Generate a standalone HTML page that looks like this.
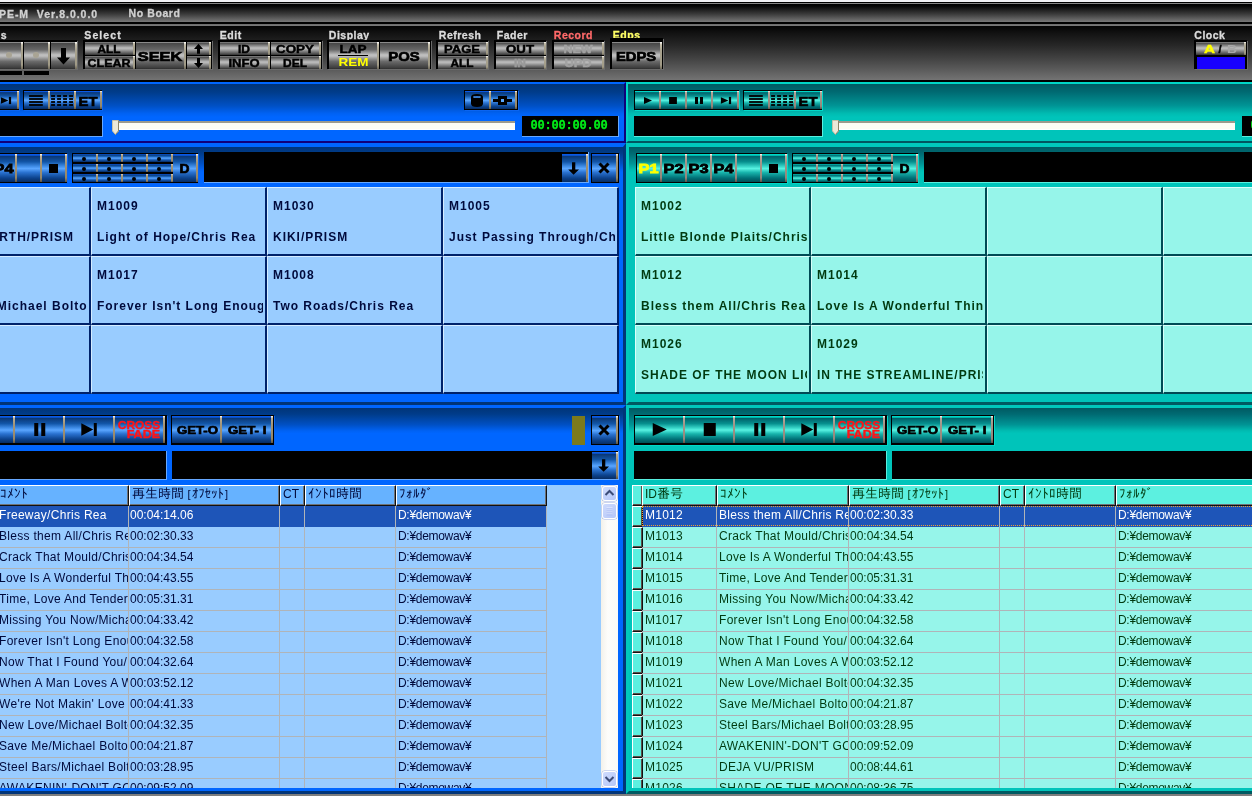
<!DOCTYPE html><html lang="ja"><head><meta charset="utf-8"><title>PE-M Ver.8.0.0.0</title><style>
html,body{margin:0;padding:0}
body{width:1252px;height:796px;overflow:hidden;position:relative;background:#7e7e7e;font-family:"Liberation Sans","IPAGothic",sans-serif;font-size:12px;line-height:1}
div,span,svg{position:absolute;box-sizing:border-box}
.ex{font-family:"Liberation Sans",sans-serif;font-weight:bold}
#root{left:0;top:0;width:1252px;height:796px;overflow:hidden;will-change:transform}
#top0{left:0;top:0;width:1252px;height:4px;background:linear-gradient(#f3f3f6 0,#f3f3f6 50%,#000 50%,#000 75%,#858585 75%,#858585 100%)}
#title{left:0;top:4px;width:1252px;height:18px;background:linear-gradient(#000 0,#050505 10%,#3a3a3a 55%,#787878 100%)}
#tsep1{left:0;top:22px;width:1252px;height:2px;background:#000}
#tsep2{left:0;top:24px;width:1252px;height:2px;background:linear-gradient(#6a6a6a,#7c7c7c)}
#tool{left:0;top:26px;width:1252px;height:54px;background:linear-gradient(#040404 0,#141414 15%,#262626 35%,#424242 60%,#606060 85%,#737373 100%)}
#tsep3{left:0;top:80px;width:1252px;height:2px;background:#000}
.lbl{-webkit-text-stroke:.3px;color:#dcdcdc;font-weight:bold;font-size:10.5px;letter-spacing:.5px;white-space:nowrap;height:12px;line-height:12px}
.gbox{background:#000;box-shadow:1px 1px 0 #6a6a6a}
.gb{background:linear-gradient(#8a8a8a 0,#8a8a8a 3.6%,#464646 4%,#666 28%,#bebebe 47%,#bebebe 52%,#6a6a6a 72%,#3c3c3c 96%,#2c2c2c 100%);overflow:hidden}
.gb.s{background:linear-gradient(#777 0,#777 7%,#484848 8%,#b8b8b8 44%,#b8b8b8 52%,#4a4a4a 92%,#303030 100%)}
.bb:after{background:linear-gradient(#fff 0,#bcae92 8%,#a4967a 30%,#948668 85%,#5e5444 100%) !important}
.teal .bb:after{background:linear-gradient(#fff 0,#b6a89a 8%,#a4968a 30%,#94867a 85%,#5e5048 100%) !important}
.gb:after,.bb:after,.tb:after{content:"";position:absolute;right:0;top:0;bottom:0;width:2px;background:linear-gradient(#fff 0,#c4beaa 10%,#aaa490 30%,#a09a86 85%,#6e6858 100%)}
.bb{overflow:hidden}
.tb{overflow:hidden}
.blue .bb{background:linear-gradient(#0a5ae6 0,#0a5ae6 4%,#0a3876 9%,#1256a8 28%,#3f8ce6 44%,#5aa6ff 52%,#2a72d0 66%,#0c428c 86%,#072c62 100%)}
.teal .bb{background:linear-gradient(#00d6c6 0,#00d6c6 4%,#00626a 9%,#068f8e 28%,#36d2c6 44%,#58f2e2 52%,#18b4ac 66%,#007076 86%,#004e55 100%)}
.bx{background:#000}
.blue .bx{box-shadow:1px 1px 0 #0a64f0}
.teal .bx{box-shadow:1px 1px 0 #00d8c8}
.disp{background:#000}
.blue .disp{border-right:1px solid #66a8ff;border-bottom:1px solid #66a8ff}
.teal .disp{border-right:1px solid #58f0e0;border-bottom:1px solid #58f0e0}
.pset{top:0;height:796px;width:720px;overflow:hidden}
.pan{left:0;width:720px}
.blue .pan{border-style:solid;border-color:#0066ff #10007a #10007a #0066ff}
.teal .pan{border-style:solid;border-color:#00d6c6 #005560 #005560 #00d6c6}
.blue .p3{border-color:#0066ff #003478 #003478 #0066ff}
.teal .p3{border-color:#00c8bc #005a62 #005a62 #00c8bc}
.blue .p1{background:linear-gradient(#003478 0,#003c8a 14%,#0050c4 38%,#0062f4 52%,#0066ff 58%,#0066ff 100%)}
.teal .p1{background:linear-gradient(#005a62 0,#006a72 14%,#009495 38%,#00bcb2 52%,#00c4ba 58%,#00c4ba 100%)}
.cell{width:176px;height:69px;overflow:hidden;white-space:nowrap;font-weight:bold;font-size:12px;letter-spacing:.98px}
.blue .cell{background:#99ccff;border-style:solid;border-width:1px 2px 2px 1px;border-color:#d6ecff #00226a #00226a #d6ecff;color:#000a3c;box-shadow:0 0 0 0 #000}
.teal .cell{background:#96f5ea;border-style:solid;border-width:1px 2px 2px 1px;border-color:#d8fffa #004a55 #004a55 #d8fffa;color:#003a10}
.cell span{left:5px;height:14px;line-height:14px;width:166px;overflow:hidden}
.cell .l1{top:11px}
.cell .l2{top:42px}
.tbl{overflow:hidden}
.blue .tbl{background:#99ccff}
.teal .tbl{background:#96f5ea}
.th{top:0;height:21px;border-top:1px solid #fff;border-left:1px solid #fff;border-bottom:1px solid #111;border-right:1px solid #111;box-shadow:inset -1px -1px 0 #6e7278;white-space:nowrap;overflow:hidden;font-size:12px;line-height:16px;padding-left:2px}
.blue .th{background:#66b2ff;color:#000a3c}
.teal .th{background:#5cf0e0;color:#003a10}
.th b{font-weight:normal;position:static;font-size:13px;letter-spacing:0}
.th u{text-decoration:none;letter-spacing:.5px}
.th u.n{letter-spacing:-.2px}
.th em{font-style:normal;font-size:12px}
.th i{font-style:normal;display:inline-block;width:6px;text-align:center;font-size:11px}
.th i.sp{width:2px}
.focus{border:1px dotted #f0a030}
.sel{left:7px;width:11px;height:21px;border-top:1px solid #fff;border-left:1px solid #fff;border-bottom:1px solid #111;border-right:1px solid #111;box-shadow:inset -1px -1px 0 #5a5048}
.blue .sel{background:#66b2ff}
.teal .sel{background:#5cf0e0}
.row{left:0;height:21px;width:720px;overflow:visible}
.td{top:0;height:21px;border-bottom:1px solid #b0b4b8;overflow:hidden;white-space:nowrap;font-size:12px;line-height:19px;padding-left:2px;letter-spacing:.25px}
.blue .td{color:#000a3c}
.teal .td{color:#003a10}
.row.on{background:#1e55b8}
.row.on .td{color:#fff;border-bottom-color:#1e55b8}
.vl{top:21px;width:1px;height:300px;background:#b0b4b8}
.ico{overflow:visible}
</style></head><body><div id="root"><div id="top0"></div><div id="title"></div><div id="tsep1"></div><div id="tsep2"></div><div id="tool"></div><div id="tsep3"></div><div class="lbl" style="left:-1px;top:8px;color:#d0d0d0;font-size:10.5px;letter-spacing:.95px">PE-M&nbsp; Ver.8.0.0.0</div><div class="lbl" style="left:128px;top:7px;color:#d0d0d0;font-size:10.5px;letter-spacing:.6px;left:128.500px">No Board</div><div class="lbl" style="left:0.8px;top:28.8px;color:#dcdcdc">s</div><div class="gbox" style="left:-30px;top:40px;width:107px;height:29px;"></div><div class="gb" style="left:-28px;top:42px;width:51px;height:27px;"><div style="left:34px;top:10px;width:6px;height:6px;border-radius:3px;background:#a9a494"></div></div><div class="gb" style="left:24px;top:42px;width:26px;height:27px;"><div style="left:9px;top:10px;width:6px;height:6px;border-radius:3px;background:#a9a494"></div></div><div class="gb" style="left:51px;top:42px;width:26px;height:27px;"><svg class="ico" width="26" height="27" style="left:0;top:0"><path d="M10 6h5v9.500h4l-6.500 7l-6.500 -7h4z" fill="#000"/></svg></div><div class="" style="left:0px;top:71px;width:22px;height:4px;background:#000"></div><div class="" style="left:24px;top:71px;width:25px;height:4px;background:#000"></div><div class="lbl" style="left:84.3px;top:28.8px;color:#dcdcdc;letter-spacing:1.1px">Select</div><div class="gbox" style="left:83px;top:40px;width:129px;height:29px;"></div><div class="gb s" style="left:85px;top:42px;width:50px;height:13px;"><svg width="50" height="13" viewBox="0 0 50 13" style="left:0;top:0"><text x="12.5" y="11.08" textLength="23" lengthAdjust="spacingAndGlyphs" font-family="Liberation Sans, sans-serif" font-weight="bold" font-size="10.5" fill="#000" stroke="#000" stroke-width="0.45" >ALL</text></svg></div><div class="gb s" style="left:85px;top:56px;width:50px;height:13px;"><svg width="50" height="13" viewBox="0 0 50 13" style="left:0;top:0"><text x="2.5" y="11.08" textLength="43" lengthAdjust="spacingAndGlyphs" font-family="Liberation Sans, sans-serif" font-weight="bold" font-size="10.5" fill="#000" stroke="#000" stroke-width="0.45" >CLEAR</text></svg></div><div class="gb" style="left:136px;top:42px;width:50px;height:27px;"><svg width="50" height="27" viewBox="0 0 50 27" style="left:0;top:0"><text x="1.75" y="19.052" textLength="44.5" lengthAdjust="spacingAndGlyphs" font-family="Liberation Sans, sans-serif" font-weight="bold" font-size="13.2" fill="#000" stroke="#000" stroke-width="0.7" >SEEK</text></svg></div><div class="gb s" style="left:187px;top:42px;width:24px;height:13px;"><svg class="ico" width="24" height="13" style="left:0;top:0"><path d="M11.500 1.800l4.500 5.200h-3v4.800h-3v-4.800h-3z" fill="#000"/></svg></div><div class="gb s" style="left:187px;top:56px;width:24px;height:13px;"><svg class="ico" width="24" height="13" style="left:0;top:0"><path d="M11.500 11.900l4.500 -4.800h-3v-5h-3v5h-3z" fill="#000"/></svg></div><div class="lbl" style="left:219.8px;top:28.8px;color:#dcdcdc">Edit</div><div class="gbox" style="left:218px;top:40px;width:104px;height:29px;"></div><div class="gb s" style="left:220px;top:42px;width:50px;height:13px;"><svg width="50" height="13" viewBox="0 0 50 13" style="left:0;top:0"><text x="18" y="11.08" textLength="12" lengthAdjust="spacingAndGlyphs" font-family="Liberation Sans, sans-serif" font-weight="bold" font-size="10.5" fill="#000" stroke="#000" stroke-width="0.45" >ID</text></svg></div><div class="gb s" style="left:220px;top:56px;width:50px;height:13px;"><svg width="50" height="13" viewBox="0 0 50 13" style="left:0;top:0"><text x="8.5" y="11.08" textLength="31" lengthAdjust="spacingAndGlyphs" font-family="Liberation Sans, sans-serif" font-weight="bold" font-size="10.5" fill="#000" stroke="#000" stroke-width="0.45" >INFO</text></svg></div><div class="gb s" style="left:271px;top:42px;width:50px;height:13px;"><svg width="50" height="13" viewBox="0 0 50 13" style="left:0;top:0"><text x="5" y="11.08" textLength="38" lengthAdjust="spacingAndGlyphs" font-family="Liberation Sans, sans-serif" font-weight="bold" font-size="10.5" fill="#000" stroke="#000" stroke-width="0.45" >COPY</text></svg></div><div class="gb s" style="left:271px;top:56px;width:50px;height:13px;"><svg width="50" height="13" viewBox="0 0 50 13" style="left:0;top:0"><text x="12" y="11.08" textLength="24" lengthAdjust="spacingAndGlyphs" font-family="Liberation Sans, sans-serif" font-weight="bold" font-size="10.5" fill="#000" stroke="#000" stroke-width="0.45" >DEL</text></svg></div><div class="lbl" style="left:328.8px;top:28.8px;color:#dcdcdc">Display</div><div class="gbox" style="left:327px;top:40px;width:104px;height:29px;"></div><div class="gb" style="left:329px;top:42px;width:50px;height:27px;"><svg width="50" height="14" viewBox="0 0 50 14" style="left:0;top:0"><text x="10.5" y="11" textLength="27" lengthAdjust="spacingAndGlyphs" font-family="Liberation Sans, sans-serif" font-weight="bold" font-size="10.5" fill="#000" stroke="#000" stroke-width="0.45" >LAP</text></svg><div style="left:9px;top:12.500px;width:30px;height:1.500px;background:#000"></div><svg width="50" height="14" style="left:0;top:13px"><text x="9.5" y="11" textLength="30" lengthAdjust="spacingAndGlyphs" font-family="Liberation Sans, sans-serif" font-weight="bold" font-size="10.5" fill="#ffff00">REM</text></svg></div><div class="gb" style="left:380px;top:42px;width:50px;height:27px;"><svg width="50" height="27" viewBox="0 0 50 27" style="left:0;top:0"><text x="8.3" y="18.836" textLength="31.4" lengthAdjust="spacingAndGlyphs" font-family="Liberation Sans, sans-serif" font-weight="bold" font-size="12.6" fill="#000" stroke="#000" stroke-width="0.7" >POS</text></svg></div><div class="lbl" style="left:438.8px;top:28.8px;color:#dcdcdc">Refresh</div><div class="gbox" style="left:436px;top:40px;width:52px;height:29px;"></div><div class="gb s" style="left:438px;top:42px;width:50px;height:13px;"><svg width="50" height="13" viewBox="0 0 50 13" style="left:0;top:0"><text x="6" y="11.08" textLength="36" lengthAdjust="spacingAndGlyphs" font-family="Liberation Sans, sans-serif" font-weight="bold" font-size="10.5" fill="#000" stroke="#000" stroke-width="0.45" >PAGE</text></svg></div><div class="gb s" style="left:438px;top:56px;width:50px;height:13px;"><svg width="50" height="13" viewBox="0 0 50 13" style="left:0;top:0"><text x="12.5" y="11.08" textLength="23" lengthAdjust="spacingAndGlyphs" font-family="Liberation Sans, sans-serif" font-weight="bold" font-size="10.5" fill="#000" stroke="#000" stroke-width="0.45" >ALL</text></svg></div><div class="lbl" style="left:496.8px;top:28.8px;color:#dcdcdc">Fader</div><div class="gbox" style="left:494px;top:40px;width:52px;height:29px;"></div><div class="gb s" style="left:496px;top:42px;width:50px;height:13px;"><svg width="50" height="13" viewBox="0 0 50 13" style="left:0;top:0"><text x="10" y="11.08" textLength="28" lengthAdjust="spacingAndGlyphs" font-family="Liberation Sans, sans-serif" font-weight="bold" font-size="10.5" fill="#000" stroke="#000" stroke-width="0.45" >OUT</text></svg></div><div class="gb s" style="left:496px;top:56px;width:50px;height:13px;"><svg width="50" height="13" viewBox="0 0 50 13" style="left:0;top:0"><text x="18" y="11.08" textLength="12" lengthAdjust="spacingAndGlyphs" font-family="Liberation Sans, sans-serif" font-weight="bold" font-size="10.5" fill="#9a9a9a" stroke="#9a9a9a" stroke-width="0.45" >IN</text></svg></div><div class="lbl" style="left:553.8px;top:28.8px;color:#ff6a6a">Record</div><div class="gbox" style="left:552px;top:40px;width:52px;height:29px;"></div><div class="gb s" style="left:554px;top:42px;width:50px;height:13px;"><svg width="50" height="13" viewBox="0 0 50 13" style="left:0;top:0"><text x="9.5" y="11.08" textLength="29" lengthAdjust="spacingAndGlyphs" font-family="Liberation Sans, sans-serif" font-weight="bold" font-size="10.5" fill="#a2a2a2" stroke="#a2a2a2" stroke-width="0.45" >NEW</text></svg></div><div class="gb s" style="left:554px;top:56px;width:50px;height:13px;"><svg width="50" height="13" viewBox="0 0 50 13" style="left:0;top:0"><text x="10.5" y="11.08" textLength="27" lengthAdjust="spacingAndGlyphs" font-family="Liberation Sans, sans-serif" font-weight="bold" font-size="10.5" fill="#a2a2a2" stroke="#a2a2a2" stroke-width="0.45" >UPD</text></svg></div><div class="lbl" style="left:612.8px;top:28.8px;color:#ffff66">Edps</div><div class="gbox" style="left:610px;top:38px;width:53px;height:31px;"></div><div class="gb" style="left:612px;top:42px;width:50px;height:27px;"><svg width="50" height="27" viewBox="0 0 50 27" style="left:0;top:0"><text x="3.9" y="18.692" textLength="40.2" lengthAdjust="spacingAndGlyphs" font-family="Liberation Sans, sans-serif" font-weight="bold" font-size="12.2" fill="#000" stroke="#000" stroke-width="0.7" >EDPS</text></svg></div><div class="lbl" style="left:1194.3px;top:28.8px;color:#dcdcdc">Clock</div><div class="gbox" style="left:1194px;top:40px;width:53px;height:29px;"></div><div class="gb s" style="left:1196px;top:42px;width:50px;height:13px;"><svg width="50" height="13" style="left:0;top:0"><text x="8" y="11" font-family="Liberation Sans, sans-serif" font-weight="bold" font-size="11" fill="#ffff00" stroke="#ffff00" stroke-width=".4" textLength="11" lengthAdjust="spacingAndGlyphs">A</text><text x="22.500" y="11" stroke="#000" stroke-width=".5" font-family="Liberation Sans, sans-serif" font-weight="bold" font-size="11" fill="#000">/</text><text x="31" y="11" font-family="Liberation Sans, sans-serif" font-weight="bold" font-size="11" fill="#a8a8a8" textLength="10" lengthAdjust="spacingAndGlyphs">B</text></svg></div><div class="" style="left:1197px;top:57px;width:48px;height:12px;background:#1800ff"></div><div class="pset blue" style="left:-94px;width:720px"><div class="pan p1" style="left:0px;top:82px;width:720px;height:61px;border-width:2px 2px 2px 2px"></div><div class="bx" style="left:8px;top:90px;width:105px;height:20px;"></div><div class="bb" style="left:9px;top:91px;width:26px;height:18px;"><svg class="ico" width="26" height="18" style="left:0;top:0"><path d="M9 5.9v7.2l8 -3.6z" fill="#000"/></svg></div><div class="bb" style="left:35px;top:91px;width:26px;height:18px;"><svg class="ico" width="26" height="18" style="left:0;top:0"><rect x="8.1" y="6" width="7.8" height="7" fill="#000"/></svg></div><div class="bb" style="left:61px;top:91px;width:26px;height:18px;"><svg class="ico" width="26" height="18" style="left:0;top:0"><rect x="8" y="6" width="3" height="7" fill="#000"/><rect x="13" y="6" width="3" height="7" fill="#000"/></svg></div><div class="bb" style="left:87px;top:91px;width:26px;height:18px;"><svg class="ico" width="26" height="18" style="left:0;top:0"><path d="M7.9 6.2v6.6l7.5 -3.3z" fill="#000"/><rect x="15.9" y="5.9" width="2.2" height="7.2" fill="#000"/></svg></div><div class="bx" style="left:117px;top:90px;width:79px;height:20px;"></div><div class="bb" style="left:118px;top:91px;width:26px;height:18px;"><svg class="ico" width="26" height="18" style="left:0;top:0"><rect x="5.100" y="4.1" width="13.700" height="1.800" fill="#000"/><rect x="5.100" y="7.1" width="13.700" height="1.800" fill="#000"/><rect x="5.100" y="10.1" width="13.700" height="1.800" fill="#000"/><rect x="5.100" y="13.1" width="13.700" height="1.800" fill="#000"/></svg></div><div class="bb" style="left:144px;top:91px;width:26px;height:18px;"><svg class="ico" width="26" height="18" style="left:0;top:0"><rect x="1.1" y="4.1" width="3.900" height="1.800" fill="#000"/><rect x="7.1" y="4.1" width="3.900" height="1.800" fill="#000"/><rect x="13.1" y="4.1" width="3.900" height="1.800" fill="#000"/><rect x="19.1" y="4.1" width="3.900" height="1.800" fill="#000"/><rect x="1.1" y="7.1" width="3.900" height="1.800" fill="#000"/><rect x="7.1" y="7.1" width="3.900" height="1.800" fill="#000"/><rect x="13.1" y="7.1" width="3.900" height="1.800" fill="#000"/><rect x="19.1" y="7.1" width="3.900" height="1.800" fill="#000"/><rect x="1.1" y="10.1" width="3.900" height="1.800" fill="#000"/><rect x="7.1" y="10.1" width="3.900" height="1.800" fill="#000"/><rect x="13.1" y="10.1" width="3.900" height="1.800" fill="#000"/><rect x="19.1" y="10.1" width="3.900" height="1.800" fill="#000"/><rect x="1.1" y="13.1" width="3.900" height="1.800" fill="#000"/><rect x="7.1" y="13.1" width="3.900" height="1.800" fill="#000"/><rect x="13.1" y="13.1" width="3.900" height="1.800" fill="#000"/><rect x="19.1" y="13.1" width="3.900" height="1.800" fill="#000"/></svg></div><div class="bb" style="left:170px;top:91px;width:26px;height:18px;"><svg width="26" height="18" viewBox="0 0 26 18" style="left:0;top:0"><text x="2.55" y="14.9" textLength="18.9" lengthAdjust="spacingAndGlyphs" font-family="Liberation Sans, sans-serif" font-weight="bold" font-size="13.3" fill="#000" stroke="#000" stroke-width="0.7" >ET</text></svg></div><div class="disp" style="left:8px;top:116px;width:189px;height:21px;"></div><div class="bx" style="left:558px;top:90px;width:54px;height:20px;"></div><div class="bb" style="left:559px;top:91px;width:26px;height:18px;"><svg class="ico" width="26" height="18" style="left:0;top:0"><path d="M6 6v6.500q0 3.500 6 3.500q6 0 6 -3.500v-6.500q0 -3 -6 -3q-6 0 -6 3z" fill="#000"/><ellipse cx="12" cy="6" rx="4" ry="1" fill="#4a96ee"/><rect x="10" y="5.700" width="4" height=".6" fill="#0b3d82"/></svg></div><div class="bb" style="left:585px;top:91px;width:26px;height:18px;"><svg class="ico" width="26" height="18" style="left:0;top:0"><rect x="2" y="8" width="19" height="3" fill="#000"/><rect x="7" y="5" width="9" height="9" fill="#000"/><rect x="10" y="8" width="3" height="3" fill="#5aa8ff"/></svg></div><div class="" style="left:212px;top:121px;width:397px;height:9px;background:#fdfcf4;border-top:2px solid #9c9a8c;border-left:1px solid #9c9a8c;border-bottom:1px solid #fff"></div><svg width="8" height="16" style="left:205.500px;top:119.500px"><path d="M.500 .500h6v10.500l-3 3.500l-3 -3.500z" fill="#ece9d8" stroke="#c8c2a8" stroke-width="1"/><path d="M6.500 .500v10.500l-3 3.500" fill="none" stroke="#8a8468" stroke-width="1"/></svg><div class="disp" style="left:615.5px;top:116px;width:97.5px;height:21px;"><span style="left:9px;top:4px;color:#00f218;-webkit-text-stroke:.3px #00f218;font-family:'Liberation Mono',monospace;font-weight:bold;font-size:12px;letter-spacing:-.2px;white-space:nowrap">00:00:00.00</span></div><div class="pan p1 p3" style="left:0px;top:143px;width:720px;height:262px;border-width:4px 3px 3px 3px;background-size:100% 44px;background-repeat:no-repeat;background-color:#0066ff"></div><div class="bx" style="left:9.8px;top:153px;width:151px;height:29.5px;"></div><div class="bb" style="left:10.5px;top:154px;width:25px;height:28px;"><svg width="25" height="28" viewBox="0 0 25 28" style="left:0;top:0"><text x="1.5" y="19.3" textLength="20" lengthAdjust="spacingAndGlyphs" font-family="Liberation Sans, sans-serif" font-weight="bold" font-size="12.8" fill="#000" stroke="#000" stroke-width="0.8" >P1</text></svg></div><div class="bb" style="left:35.5px;top:154px;width:25px;height:28px;"><svg width="25" height="28" viewBox="0 0 25 28" style="left:0;top:0"><text x="1.5" y="19.3" textLength="20" lengthAdjust="spacingAndGlyphs" font-family="Liberation Sans, sans-serif" font-weight="bold" font-size="12.8" fill="#000" stroke="#000" stroke-width="0.8" >P2</text></svg></div><div class="bb" style="left:60.5px;top:154px;width:25px;height:28px;"><svg width="25" height="28" viewBox="0 0 25 28" style="left:0;top:0"><text x="1.5" y="19.3" textLength="20" lengthAdjust="spacingAndGlyphs" font-family="Liberation Sans, sans-serif" font-weight="bold" font-size="12.8" fill="#000" stroke="#000" stroke-width="0.8" >P3</text></svg></div><div class="bb" style="left:85.5px;top:154px;width:25px;height:28px;"><svg width="25" height="28" viewBox="0 0 25 28" style="left:0;top:0"><text x="1.5" y="19.3" textLength="20" lengthAdjust="spacingAndGlyphs" font-family="Liberation Sans, sans-serif" font-weight="bold" font-size="12.8" fill="#000" stroke="#000" stroke-width="0.8" >P4</text></svg></div><div class="bb" style="left:110.5px;top:154px;width:25px;height:28px;"></div><div class="bb" style="left:135.5px;top:154px;width:25px;height:28px;"><svg class="ico" width="25" height="28" style="left:0;top:0"><rect x="7" y="10" width="9" height="9" fill="#000"/></svg></div><div class="bx" style="left:165.8px;top:153px;width:126.6px;height:29.5px;"></div><div class="bb" style="left:167px;top:154px;width:25px;height:8px;"><div style="left:9.100px;top:2.800px;width:4px;height:4px;border-radius:2px;background:#000"></div></div><div class="bb" style="left:192px;top:154px;width:25px;height:8px;"><div style="left:9.100px;top:2.800px;width:4px;height:4px;border-radius:2px;background:#000"></div></div><div class="bb" style="left:217px;top:154px;width:25px;height:8px;"><div style="left:9.100px;top:2.800px;width:4px;height:4px;border-radius:2px;background:#000"></div></div><div class="bb" style="left:242px;top:154px;width:25px;height:8px;"><div style="left:9.100px;top:2.800px;width:4px;height:4px;border-radius:2px;background:#000"></div></div><div class="bb" style="left:167px;top:164px;width:25px;height:8px;"><div style="left:9.100px;top:2.800px;width:4px;height:4px;border-radius:2px;background:#000"></div></div><div class="bb" style="left:192px;top:164px;width:25px;height:8px;"><div style="left:9.100px;top:2.800px;width:4px;height:4px;border-radius:2px;background:#000"></div></div><div class="bb" style="left:217px;top:164px;width:25px;height:8px;"><div style="left:9.100px;top:2.800px;width:4px;height:4px;border-radius:2px;background:#000"></div></div><div class="bb" style="left:242px;top:164px;width:25px;height:8px;"><div style="left:9.100px;top:2.800px;width:4px;height:4px;border-radius:2px;background:#000"></div></div><div class="bb" style="left:167px;top:174px;width:25px;height:8px;"><div style="left:9.100px;top:2.800px;width:4px;height:4px;border-radius:2px;background:#000"></div></div><div class="bb" style="left:192px;top:174px;width:25px;height:8px;"><div style="left:9.100px;top:2.800px;width:4px;height:4px;border-radius:2px;background:#000"></div></div><div class="bb" style="left:217px;top:174px;width:25px;height:8px;"><div style="left:9.100px;top:2.800px;width:4px;height:4px;border-radius:2px;background:#000"></div></div><div class="bb" style="left:242px;top:174px;width:25px;height:8px;"><div style="left:9.100px;top:2.800px;width:4px;height:4px;border-radius:2px;background:#000"></div></div><div class="bb" style="left:267px;top:154px;width:25px;height:27.5px;"><svg width="25" height="27.5" viewBox="0 0 25 27.5" style="left:0;top:0"><text x="6.5" y="18.7" textLength="10" lengthAdjust="spacingAndGlyphs" font-family="Liberation Sans, sans-serif" font-weight="bold" font-size="12.7" fill="#000" stroke="#000" stroke-width="0.7" >D</text></svg></div><div class="disp" style="left:298px;top:152px;width:384.5px;height:31px;"></div><div class="bb" style="left:655.5px;top:154px;width:26px;height:28px;"><svg class="ico" width="26" height="28" style="left:0;top:0"><path d="M10 8.300h3.300v7.200h3.700l-5.400 5.300l-5.400 -5.300h3.800z" fill="#000"/></svg></div><div class="bx" style="left:684.5px;top:153px;width:28px;height:30px;"></div><div class="bb" style="left:685.5px;top:154px;width:26px;height:28px;"><svg class="ico" width="26" height="28" style="left:0;top:0"><path d="M7.500 9.500l9 9M16.500 9.500l-9 9" stroke="#000" stroke-width="3"/></svg></div><div class="cell" style="left:9px;top:187px;width:176px;height:69px;"><span class="l1">M1028</span><span class="l2" style="left:auto;right:15px;width:auto">MOTHER EARTH/PRISM</span></div><div class="cell" style="left:185px;top:187px;width:176px;height:69px;"><span class="l1">M1009</span><span class="l2" style="">Light of Hope/Chris Rea</span></div><div class="cell" style="left:361px;top:187px;width:176px;height:69px;"><span class="l1">M1030</span><span class="l2" style="">KIKI/PRISM</span></div><div class="cell" style="left:537px;top:187px;width:176px;height:69px;"><span class="l1">M1005</span><span class="l2" style="">Just Passing Through/Chris Rea</span></div><div class="cell" style="left:9px;top:256px;width:176px;height:69px;"><span class="l1">M1023</span><span class="l2" style="left:8px;width:163px">Steel Bars/Michael Bolton</span></div><div class="cell" style="left:185px;top:256px;width:176px;height:69px;"><span class="l1">M1017</span><span class="l2" style="">Forever Isn't Long Enough/Michael Bolton</span></div><div class="cell" style="left:361px;top:256px;width:176px;height:69px;"><span class="l1">M1008</span><span class="l2" style="">Two Roads/Chris Rea</span></div><div class="cell" style="left:537px;top:256px;width:176px;height:69px;"></div><div class="cell" style="left:9px;top:325px;width:176px;height:69px;"></div><div class="cell" style="left:185px;top:325px;width:176px;height:69px;"></div><div class="cell" style="left:361px;top:325px;width:176px;height:69px;"></div><div class="cell" style="left:537px;top:325px;width:176px;height:69px;"></div><div class="pan p1 p3" style="left:0px;top:405px;width:720px;height:389px;border-width:3px 3px 3px 3px;background-size:100% 44px;background-repeat:no-repeat;background-color:#0066ff"></div><div class="bx" style="left:8px;top:415px;width:252.5px;height:30px;"></div><div class="bb" style="left:9px;top:416px;width:50px;height:27px;"><svg class="ico" width="51.5" height="27" style="left:0;top:0"><path d="M17.75 7v13l14 -6.5z" fill="#000"/></svg></div><div class="bb" style="left:59px;top:416px;width:50px;height:27px;"><svg class="ico" width="51.5" height="27" style="left:0;top:0"><rect x="18.75" y="7" width="12" height="13" fill="#000"/></svg></div><div class="bb" style="left:109px;top:416px;width:50px;height:27px;"><svg class="ico" width="51.5" height="27" style="left:0;top:0"><rect x="19.25" y="7" width="4" height="13" fill="#000"/><rect x="26.25" y="7" width="4" height="13" fill="#000"/></svg></div><div class="bb" style="left:159px;top:416px;width:50px;height:27px;"><svg class="ico" width="51.5" height="27" style="left:0;top:0"><path d="M16.3 7.3v12.4l12 -6.2z" fill="#000"/><rect x="28.8" y="7" width="3" height="13" fill="#000"/></svg></div><div class="bb" style="left:209px;top:416px;width:50px;height:27px;"><svg width="50" height="28" style="left:1px;top:0"><text x="1.800" y="12.800" textLength="42.300" lengthAdjust="spacingAndGlyphs" font-family="Liberation Sans, sans-serif" font-weight="bold" font-size="10.400" fill="#ff1418" stroke="#ff1418" stroke-width=".35">CROSS</text><text x="10.700" y="21.900" textLength="33.300" lengthAdjust="spacingAndGlyphs" font-family="Liberation Sans, sans-serif" font-weight="bold" font-size="10.400" fill="#ff1418" stroke="#ff1418" stroke-width=".35">FADE</text></svg></div><div class="bx" style="left:264.5px;top:415px;width:103.5px;height:30px;"></div><div class="bb" style="left:266px;top:416px;width:50px;height:27px;"><svg width="50" height="27" viewBox="0 0 50 27" style="left:0;top:0"><text x="5" y="17.9" textLength="41" lengthAdjust="spacingAndGlyphs" font-family="Liberation Sans, sans-serif" font-weight="bold" font-size="10" fill="#000" stroke="#000" stroke-width="0.6" >GET-O</text></svg></div><div class="bb" style="left:316px;top:416px;width:50.5px;height:27px;"><svg width="50" height="27" viewBox="0 0 50 27" style="left:0;top:0"><text x="6" y="17.9" textLength="38.4" lengthAdjust="spacingAndGlyphs" font-family="Liberation Sans, sans-serif" font-weight="bold" font-size="10" fill="#000" stroke="#000" stroke-width="0.6" >GET- I</text></svg></div><div class="" style="left:666px;top:415.5px;width:13px;height:29px;background:#7c7a1c"></div><div class="bx" style="left:684.5px;top:415px;width:28px;height:30px;"></div><div class="bb" style="left:685.5px;top:416px;width:26px;height:28px;"><svg class="ico" width="26" height="28" style="left:0;top:0"><path d="M7.500 9.500l9 9M16.500 9.500l-9 9" stroke="#000" stroke-width="3"/></svg></div><div class="disp" style="left:8px;top:451px;width:252.5px;height:29px;"></div><div class="disp" style="left:266px;top:451px;width:446.5px;height:29px;"></div><div class="bb" style="left:685.5px;top:452px;width:26px;height:27px;"><svg class="ico" width="26" height="27" style="left:0;top:0"><path d="M10 7.300h3.300v7.200h3.700l-5.400 5.300l-5.400 -5.300h3.800z" fill="#000"/></svg></div><div class="tbl" style="left:0px;top:485px;width:712px;height:303px"><div class="sel" style="left:6px;top:0"></div><div class="th" style="left:16px;width:75px"><b><em>ID</em>番号</b></div><div class="th" style="left:91px;width:132px"><b><u>ｺﾒﾝﾄ</u></b></div><div class="th" style="left:223px;width:151px"><b>再生時間<i class="sp"> </i><i>[</i><u class="n">ｵﾌｾｯﾄ</u><i>]</i></b></div><div class="th" style="left:374px;width:25px"><b><em>CT</em></b></div><div class="th" style="left:399px;width:91px"><b><u>ｲﾝﾄﾛ</u>時間</b></div><div class="th" style="left:490px;width:151px"><b><u>ﾌｫﾙﾀﾞ</u></b></div><div class="row on" style="top:21px;left:16px;width:625px"><div class="sel" style="left:-10px;top:0"></div><div class="td" style="left:0px;width:74px;padding-left:3px">M1011</div><div class="td" style="left:75px;width:131px;padding-left:2px;letter-spacing:.3px">Freeway/Chris Rea</div><div class="td" style="left:207px;width:150px;padding-left:1px;letter-spacing:0">00:04:14.06</div><div class="td" style="left:358px;width:24px;"></div><div class="td" style="left:383px;width:90px;"></div><div class="td" style="left:474px;width:150px;padding-left:2px;letter-spacing:-.3px">D:¥demowav¥</div><div class="td" style="left:0;width:625px"></div></div><div class="row" style="top:42px;left:16px;width:625px"><div class="sel" style="left:-10px;top:0"></div><div class="td" style="left:0px;width:74px;padding-left:3px">M1012</div><div class="td" style="left:75px;width:131px;padding-left:2px;letter-spacing:.3px">Bless them All/Chris Rea</div><div class="td" style="left:207px;width:150px;padding-left:1px;letter-spacing:0">00:02:30.33</div><div class="td" style="left:358px;width:24px;"></div><div class="td" style="left:383px;width:90px;"></div><div class="td" style="left:474px;width:150px;padding-left:2px;letter-spacing:-.3px">D:¥demowav¥</div><div class="td" style="left:0;width:625px"></div></div><div class="row" style="top:63px;left:16px;width:625px"><div class="sel" style="left:-10px;top:0"></div><div class="td" style="left:0px;width:74px;padding-left:3px">M1013</div><div class="td" style="left:75px;width:131px;padding-left:2px;letter-spacing:.3px">Crack That Mould/Chris Rea</div><div class="td" style="left:207px;width:150px;padding-left:1px;letter-spacing:0">00:04:34.54</div><div class="td" style="left:358px;width:24px;"></div><div class="td" style="left:383px;width:90px;"></div><div class="td" style="left:474px;width:150px;padding-left:2px;letter-spacing:-.3px">D:¥demowav¥</div><div class="td" style="left:0;width:625px"></div></div><div class="row" style="top:84px;left:16px;width:625px"><div class="sel" style="left:-10px;top:0"></div><div class="td" style="left:0px;width:74px;padding-left:3px">M1014</div><div class="td" style="left:75px;width:131px;padding-left:2px;letter-spacing:.3px">Love Is A Wonderful Thing/Michael Bolton</div><div class="td" style="left:207px;width:150px;padding-left:1px;letter-spacing:0">00:04:43.55</div><div class="td" style="left:358px;width:24px;"></div><div class="td" style="left:383px;width:90px;"></div><div class="td" style="left:474px;width:150px;padding-left:2px;letter-spacing:-.3px">D:¥demowav¥</div><div class="td" style="left:0;width:625px"></div></div><div class="row" style="top:105px;left:16px;width:625px"><div class="sel" style="left:-10px;top:0"></div><div class="td" style="left:0px;width:74px;padding-left:3px">M1015</div><div class="td" style="left:75px;width:131px;padding-left:2px;letter-spacing:.3px">Time, Love And Tenderness/Michael Bolton</div><div class="td" style="left:207px;width:150px;padding-left:1px;letter-spacing:0">00:05:31.31</div><div class="td" style="left:358px;width:24px;"></div><div class="td" style="left:383px;width:90px;"></div><div class="td" style="left:474px;width:150px;padding-left:2px;letter-spacing:-.3px">D:¥demowav¥</div><div class="td" style="left:0;width:625px"></div></div><div class="row" style="top:126px;left:16px;width:625px"><div class="sel" style="left:-10px;top:0"></div><div class="td" style="left:0px;width:74px;padding-left:3px">M1016</div><div class="td" style="left:75px;width:131px;padding-left:2px;letter-spacing:.3px">Missing You Now/Michael Bolton</div><div class="td" style="left:207px;width:150px;padding-left:1px;letter-spacing:0">00:04:33.42</div><div class="td" style="left:358px;width:24px;"></div><div class="td" style="left:383px;width:90px;"></div><div class="td" style="left:474px;width:150px;padding-left:2px;letter-spacing:-.3px">D:¥demowav¥</div><div class="td" style="left:0;width:625px"></div></div><div class="row" style="top:147px;left:16px;width:625px"><div class="sel" style="left:-10px;top:0"></div><div class="td" style="left:0px;width:74px;padding-left:3px">M1017</div><div class="td" style="left:75px;width:131px;padding-left:2px;letter-spacing:.3px">Forever Isn't Long Enough/Michael Bolton</div><div class="td" style="left:207px;width:150px;padding-left:1px;letter-spacing:0">00:04:32.58</div><div class="td" style="left:358px;width:24px;"></div><div class="td" style="left:383px;width:90px;"></div><div class="td" style="left:474px;width:150px;padding-left:2px;letter-spacing:-.3px">D:¥demowav¥</div><div class="td" style="left:0;width:625px"></div></div><div class="row" style="top:168px;left:16px;width:625px"><div class="sel" style="left:-10px;top:0"></div><div class="td" style="left:0px;width:74px;padding-left:3px">M1018</div><div class="td" style="left:75px;width:131px;padding-left:2px;letter-spacing:.3px">Now That I Found You/Michael Bolton</div><div class="td" style="left:207px;width:150px;padding-left:1px;letter-spacing:0">00:04:32.64</div><div class="td" style="left:358px;width:24px;"></div><div class="td" style="left:383px;width:90px;"></div><div class="td" style="left:474px;width:150px;padding-left:2px;letter-spacing:-.3px">D:¥demowav¥</div><div class="td" style="left:0;width:625px"></div></div><div class="row" style="top:189px;left:16px;width:625px"><div class="sel" style="left:-10px;top:0"></div><div class="td" style="left:0px;width:74px;padding-left:3px">M1019</div><div class="td" style="left:75px;width:131px;padding-left:2px;letter-spacing:.3px">When A Man Loves A Woman/Michael Bolton</div><div class="td" style="left:207px;width:150px;padding-left:1px;letter-spacing:0">00:03:52.12</div><div class="td" style="left:358px;width:24px;"></div><div class="td" style="left:383px;width:90px;"></div><div class="td" style="left:474px;width:150px;padding-left:2px;letter-spacing:-.3px">D:¥demowav¥</div><div class="td" style="left:0;width:625px"></div></div><div class="row" style="top:210px;left:16px;width:625px"><div class="sel" style="left:-10px;top:0"></div><div class="td" style="left:0px;width:74px;padding-left:3px">M1020</div><div class="td" style="left:75px;width:131px;padding-left:2px;letter-spacing:.3px">We're Not Makin' Love Anymore/Michael Bolton</div><div class="td" style="left:207px;width:150px;padding-left:1px;letter-spacing:0">00:04:41.33</div><div class="td" style="left:358px;width:24px;"></div><div class="td" style="left:383px;width:90px;"></div><div class="td" style="left:474px;width:150px;padding-left:2px;letter-spacing:-.3px">D:¥demowav¥</div><div class="td" style="left:0;width:625px"></div></div><div class="row" style="top:231px;left:16px;width:625px"><div class="sel" style="left:-10px;top:0"></div><div class="td" style="left:0px;width:74px;padding-left:3px">M1021</div><div class="td" style="left:75px;width:131px;padding-left:2px;letter-spacing:.3px">New Love/Michael Bolton</div><div class="td" style="left:207px;width:150px;padding-left:1px;letter-spacing:0">00:04:32.35</div><div class="td" style="left:358px;width:24px;"></div><div class="td" style="left:383px;width:90px;"></div><div class="td" style="left:474px;width:150px;padding-left:2px;letter-spacing:-.3px">D:¥demowav¥</div><div class="td" style="left:0;width:625px"></div></div><div class="row" style="top:252px;left:16px;width:625px"><div class="sel" style="left:-10px;top:0"></div><div class="td" style="left:0px;width:74px;padding-left:3px">M1022</div><div class="td" style="left:75px;width:131px;padding-left:2px;letter-spacing:.3px">Save Me/Michael Bolton</div><div class="td" style="left:207px;width:150px;padding-left:1px;letter-spacing:0">00:04:21.87</div><div class="td" style="left:358px;width:24px;"></div><div class="td" style="left:383px;width:90px;"></div><div class="td" style="left:474px;width:150px;padding-left:2px;letter-spacing:-.3px">D:¥demowav¥</div><div class="td" style="left:0;width:625px"></div></div><div class="row" style="top:273px;left:16px;width:625px"><div class="sel" style="left:-10px;top:0"></div><div class="td" style="left:0px;width:74px;padding-left:3px">M1023</div><div class="td" style="left:75px;width:131px;padding-left:2px;letter-spacing:.3px">Steel Bars/Michael Bolton</div><div class="td" style="left:207px;width:150px;padding-left:1px;letter-spacing:0">00:03:28.95</div><div class="td" style="left:358px;width:24px;"></div><div class="td" style="left:383px;width:90px;"></div><div class="td" style="left:474px;width:150px;padding-left:2px;letter-spacing:-.3px">D:¥demowav¥</div><div class="td" style="left:0;width:625px"></div></div><div class="row" style="top:294px;left:16px;width:625px"><div class="sel" style="left:-10px;top:0"></div><div class="td" style="left:0px;width:74px;padding-left:3px">M1024</div><div class="td" style="left:75px;width:131px;padding-left:2px;letter-spacing:.3px">AWAKENIN'-DON'T GO/PRISM</div><div class="td" style="left:207px;width:150px;padding-left:1px;letter-spacing:0">00:09:52.09</div><div class="td" style="left:358px;width:24px;"></div><div class="td" style="left:383px;width:90px;"></div><div class="td" style="left:474px;width:150px;padding-left:2px;letter-spacing:-.3px">D:¥demowav¥</div><div class="td" style="left:0;width:625px"></div></div><div class="row" style="top:315px;left:16px;width:625px"><div class="sel" style="left:-10px;top:0"></div><div class="td" style="left:0px;width:74px;padding-left:3px">M1025</div><div class="td" style="left:75px;width:131px;padding-left:2px;letter-spacing:.3px">DEJA VU/PRISM</div><div class="td" style="left:207px;width:150px;padding-left:1px;letter-spacing:0">00:08:44.61</div><div class="td" style="left:358px;width:24px;"></div><div class="td" style="left:383px;width:90px;"></div><div class="td" style="left:474px;width:150px;padding-left:2px;letter-spacing:-.3px">D:¥demowav¥</div><div class="td" style="left:0;width:625px"></div></div><div class="vl" style="left:90px"></div><div class="vl" style="left:222px"></div><div class="vl" style="left:373px"></div><div class="vl" style="left:398px"></div><div class="vl" style="left:489px"></div><div class="vl" style="left:640px"></div><div style="left:695px;top:0;width:17px;height:303px;background:linear-gradient(90deg,#f3f1ea,#fdfdfb 40%,#fbfaf6)"></div><div style="left:696px;top:1px;width:15px;height:15px;background:linear-gradient(135deg,#cfdbfd,#b4c6f8);border:1px solid #fff;border-radius:3px;box-shadow:0 0 0 .500px #9fb2e6"><svg width="13" height="13" style="left:0;top:0"><path d="M2.500 8l4 -4l4 4" fill="none" stroke="#3c4c78" stroke-width="2"/></svg></div><div style="left:696px;top:17.500px;width:15px;height:16px;background:linear-gradient(135deg,#cfdbfd,#b4c6f8);border:1px solid #fff;border-radius:3px;box-shadow:0 0 0 .500px #9fb2e6"><svg width="13" height="14" style="left:0;top:0"><path d="M3.500 4h6M3.500 6h6M3.500 8h6M3.500 10h6" stroke="#eef3ff" stroke-width="1"/><path d="M3.500 4.800h6M3.500 6.800h6M3.500 8.800h6M3.500 10.800h6" stroke="#8ea4ec" stroke-width=".6"/></svg></div><div style="left:696px;top:286px;width:15px;height:16px;background:linear-gradient(135deg,#cfdbfd,#b4c6f8);border:1px solid #fff;border-radius:3px;box-shadow:0 0 0 .500px #9fb2e6"><svg width="13" height="14" style="left:0;top:0"><path d="M2.500 5l4 4l4 -4" fill="none" stroke="#3c4c78" stroke-width="2"/></svg></div></div></div><div class="pset teal" style="left:626px;width:626px"><div class="pan p1" style="left:0px;top:82px;width:720px;height:61px;border-width:2px 2px 2px 2px"></div><div class="bx" style="left:8px;top:90px;width:105px;height:20px;"></div><div class="bb" style="left:9px;top:91px;width:26px;height:18px;"><svg class="ico" width="26" height="18" style="left:0;top:0"><path d="M9 5.9v7.2l8 -3.6z" fill="#000"/></svg></div><div class="bb" style="left:35px;top:91px;width:26px;height:18px;"><svg class="ico" width="26" height="18" style="left:0;top:0"><rect x="8.1" y="6" width="7.8" height="7" fill="#000"/></svg></div><div class="bb" style="left:61px;top:91px;width:26px;height:18px;"><svg class="ico" width="26" height="18" style="left:0;top:0"><rect x="8" y="6" width="3" height="7" fill="#000"/><rect x="13" y="6" width="3" height="7" fill="#000"/></svg></div><div class="bb" style="left:87px;top:91px;width:26px;height:18px;"><svg class="ico" width="26" height="18" style="left:0;top:0"><path d="M7.9 6.2v6.6l7.5 -3.3z" fill="#000"/><rect x="15.9" y="5.9" width="2.2" height="7.2" fill="#000"/></svg></div><div class="bx" style="left:117px;top:90px;width:79px;height:20px;"></div><div class="bb" style="left:118px;top:91px;width:26px;height:18px;"><svg class="ico" width="26" height="18" style="left:0;top:0"><rect x="5.100" y="4.1" width="13.700" height="1.800" fill="#000"/><rect x="5.100" y="7.1" width="13.700" height="1.800" fill="#000"/><rect x="5.100" y="10.1" width="13.700" height="1.800" fill="#000"/><rect x="5.100" y="13.1" width="13.700" height="1.800" fill="#000"/></svg></div><div class="bb" style="left:144px;top:91px;width:26px;height:18px;"><svg class="ico" width="26" height="18" style="left:0;top:0"><rect x="1.1" y="4.1" width="3.900" height="1.800" fill="#000"/><rect x="7.1" y="4.1" width="3.900" height="1.800" fill="#000"/><rect x="13.1" y="4.1" width="3.900" height="1.800" fill="#000"/><rect x="19.1" y="4.1" width="3.900" height="1.800" fill="#000"/><rect x="1.1" y="7.1" width="3.900" height="1.800" fill="#000"/><rect x="7.1" y="7.1" width="3.900" height="1.800" fill="#000"/><rect x="13.1" y="7.1" width="3.900" height="1.800" fill="#000"/><rect x="19.1" y="7.1" width="3.900" height="1.800" fill="#000"/><rect x="1.1" y="10.1" width="3.900" height="1.800" fill="#000"/><rect x="7.1" y="10.1" width="3.900" height="1.800" fill="#000"/><rect x="13.1" y="10.1" width="3.900" height="1.800" fill="#000"/><rect x="19.1" y="10.1" width="3.900" height="1.800" fill="#000"/><rect x="1.1" y="13.1" width="3.900" height="1.800" fill="#000"/><rect x="7.1" y="13.1" width="3.900" height="1.800" fill="#000"/><rect x="13.1" y="13.1" width="3.900" height="1.800" fill="#000"/><rect x="19.1" y="13.1" width="3.900" height="1.800" fill="#000"/></svg></div><div class="bb" style="left:170px;top:91px;width:26px;height:18px;"><svg width="26" height="18" viewBox="0 0 26 18" style="left:0;top:0"><text x="2.55" y="14.9" textLength="18.9" lengthAdjust="spacingAndGlyphs" font-family="Liberation Sans, sans-serif" font-weight="bold" font-size="13.3" fill="#000" stroke="#000" stroke-width="0.7" >ET</text></svg></div><div class="disp" style="left:8px;top:116px;width:189px;height:21px;"></div><div class="" style="left:212px;top:121px;width:397px;height:9px;background:#fdfcf4;border-top:2px solid #9c9a8c;border-left:1px solid #9c9a8c;border-bottom:1px solid #fff"></div><svg width="8" height="16" style="left:205.500px;top:119.500px"><path d="M.500 .500h6v10.500l-3 3.500l-3 -3.500z" fill="#ece9d8" stroke="#c8c2a8" stroke-width="1"/><path d="M6.500 .500v10.500l-3 3.500" fill="none" stroke="#8a8468" stroke-width="1"/></svg><div class="disp" style="left:615.5px;top:116px;width:97.5px;height:21px;"><span style="left:9px;top:4px;color:#00f218;-webkit-text-stroke:.3px #00f218;font-family:'Liberation Mono',monospace;font-weight:bold;font-size:12px;letter-spacing:-.2px;white-space:nowrap">00:00:00.00</span></div><div class="pan p1 p3" style="left:0px;top:143px;width:720px;height:262px;border-width:4px 3px 3px 3px;background-size:100% 44px;background-repeat:no-repeat;background-color:#00c4ba"></div><div class="bx" style="left:9.8px;top:153px;width:151px;height:29.5px;"></div><div class="bb" style="left:10.5px;top:154px;width:25px;height:28px;"><svg width="25" height="28" viewBox="0 0 25 28" style="left:0;top:0"><text x="1.5" y="19.3" textLength="20" lengthAdjust="spacingAndGlyphs" font-family="Liberation Sans, sans-serif" font-weight="bold" font-size="12.8" fill="#ffff00" stroke="#ffff00" stroke-width="0.8" >P1</text></svg></div><div class="bb" style="left:35.5px;top:154px;width:25px;height:28px;"><svg width="25" height="28" viewBox="0 0 25 28" style="left:0;top:0"><text x="1.5" y="19.3" textLength="20" lengthAdjust="spacingAndGlyphs" font-family="Liberation Sans, sans-serif" font-weight="bold" font-size="12.8" fill="#000" stroke="#000" stroke-width="0.8" >P2</text></svg></div><div class="bb" style="left:60.5px;top:154px;width:25px;height:28px;"><svg width="25" height="28" viewBox="0 0 25 28" style="left:0;top:0"><text x="1.5" y="19.3" textLength="20" lengthAdjust="spacingAndGlyphs" font-family="Liberation Sans, sans-serif" font-weight="bold" font-size="12.8" fill="#000" stroke="#000" stroke-width="0.8" >P3</text></svg></div><div class="bb" style="left:85.5px;top:154px;width:25px;height:28px;"><svg width="25" height="28" viewBox="0 0 25 28" style="left:0;top:0"><text x="1.5" y="19.3" textLength="20" lengthAdjust="spacingAndGlyphs" font-family="Liberation Sans, sans-serif" font-weight="bold" font-size="12.8" fill="#000" stroke="#000" stroke-width="0.8" >P4</text></svg></div><div class="bb" style="left:110.5px;top:154px;width:25px;height:28px;"></div><div class="bb" style="left:135.5px;top:154px;width:25px;height:28px;"><svg class="ico" width="25" height="28" style="left:0;top:0"><rect x="7" y="10" width="9" height="9" fill="#000"/></svg></div><div class="bx" style="left:165.8px;top:153px;width:126.6px;height:29.5px;"></div><div class="bb" style="left:167px;top:154px;width:25px;height:8px;"><div style="left:9.100px;top:2.800px;width:4px;height:4px;border-radius:2px;background:#000"></div></div><div class="bb" style="left:192px;top:154px;width:25px;height:8px;"><div style="left:9.100px;top:2.800px;width:4px;height:4px;border-radius:2px;background:#000"></div></div><div class="bb" style="left:217px;top:154px;width:25px;height:8px;"><div style="left:9.100px;top:2.800px;width:4px;height:4px;border-radius:2px;background:#000"></div></div><div class="bb" style="left:242px;top:154px;width:25px;height:8px;"><div style="left:9.100px;top:2.800px;width:4px;height:4px;border-radius:2px;background:#000"></div></div><div class="bb" style="left:167px;top:164px;width:25px;height:8px;"><div style="left:9.100px;top:2.800px;width:4px;height:4px;border-radius:2px;background:#000"></div></div><div class="bb" style="left:192px;top:164px;width:25px;height:8px;"><div style="left:9.100px;top:2.800px;width:4px;height:4px;border-radius:2px;background:#000"></div></div><div class="bb" style="left:217px;top:164px;width:25px;height:8px;"><div style="left:9.100px;top:2.800px;width:4px;height:4px;border-radius:2px;background:#000"></div></div><div class="bb" style="left:242px;top:164px;width:25px;height:8px;"><div style="left:9.100px;top:2.800px;width:4px;height:4px;border-radius:2px;background:#000"></div></div><div class="bb" style="left:167px;top:174px;width:25px;height:8px;"><div style="left:9.100px;top:2.800px;width:4px;height:4px;border-radius:2px;background:#000"></div></div><div class="bb" style="left:192px;top:174px;width:25px;height:8px;"><div style="left:9.100px;top:2.800px;width:4px;height:4px;border-radius:2px;background:#000"></div></div><div class="bb" style="left:217px;top:174px;width:25px;height:8px;"><div style="left:9.100px;top:2.800px;width:4px;height:4px;border-radius:2px;background:#000"></div></div><div class="bb" style="left:242px;top:174px;width:25px;height:8px;"><div style="left:9.100px;top:2.800px;width:4px;height:4px;border-radius:2px;background:#000"></div></div><div class="bb" style="left:267px;top:154px;width:25px;height:27.5px;"><svg width="25" height="27.5" viewBox="0 0 25 27.5" style="left:0;top:0"><text x="6.5" y="18.7" textLength="10" lengthAdjust="spacingAndGlyphs" font-family="Liberation Sans, sans-serif" font-weight="bold" font-size="12.7" fill="#000" stroke="#000" stroke-width="0.7" >D</text></svg></div><div class="disp" style="left:298px;top:152px;width:384.5px;height:31px;"></div><div class="bb" style="left:655.5px;top:154px;width:26px;height:28px;"><svg class="ico" width="26" height="28" style="left:0;top:0"><path d="M10 8.300h3.300v7.200h3.700l-5.400 5.300l-5.400 -5.300h3.800z" fill="#000"/></svg></div><div class="bx" style="left:684.5px;top:153px;width:28px;height:30px;"></div><div class="bb" style="left:685.5px;top:154px;width:26px;height:28px;"><svg class="ico" width="26" height="28" style="left:0;top:0"><path d="M7.500 9.500l9 9M16.500 9.500l-9 9" stroke="#000" stroke-width="3"/></svg></div><div class="cell" style="left:9px;top:187px;width:176px;height:69px;"><span class="l1">M1002</span><span class="l2" style="">Little Blonde Plaits/Chris Rea</span></div><div class="cell" style="left:185px;top:187px;width:176px;height:69px;"></div><div class="cell" style="left:361px;top:187px;width:176px;height:69px;"></div><div class="cell" style="left:537px;top:187px;width:176px;height:69px;"></div><div class="cell" style="left:9px;top:256px;width:176px;height:69px;"><span class="l1">M1012</span><span class="l2" style="">Bless them All/Chris Rea</span></div><div class="cell" style="left:185px;top:256px;width:176px;height:69px;"><span class="l1">M1014</span><span class="l2" style="">Love Is A Wonderful Thing/Michael Bolton</span></div><div class="cell" style="left:361px;top:256px;width:176px;height:69px;"></div><div class="cell" style="left:537px;top:256px;width:176px;height:69px;"></div><div class="cell" style="left:9px;top:325px;width:176px;height:69px;"><span class="l1">M1026</span><span class="l2" style="">SHADE OF THE MOON LIGHT/PRISM</span></div><div class="cell" style="left:185px;top:325px;width:176px;height:69px;"><span class="l1">M1029</span><span class="l2" style="">IN THE STREAMLINE/PRISM</span></div><div class="cell" style="left:361px;top:325px;width:176px;height:69px;"></div><div class="cell" style="left:537px;top:325px;width:176px;height:69px;"></div><div class="pan p1 p3" style="left:0px;top:405px;width:720px;height:389px;border-width:3px 3px 3px 3px;background-size:100% 44px;background-repeat:no-repeat;background-color:#00c4ba"></div><div class="bx" style="left:8px;top:415px;width:252.5px;height:30px;"></div><div class="bb" style="left:9px;top:416px;width:50px;height:27px;"><svg class="ico" width="51.5" height="27" style="left:0;top:0"><path d="M17.75 7v13l14 -6.5z" fill="#000"/></svg></div><div class="bb" style="left:59px;top:416px;width:50px;height:27px;"><svg class="ico" width="51.5" height="27" style="left:0;top:0"><rect x="18.75" y="7" width="12" height="13" fill="#000"/></svg></div><div class="bb" style="left:109px;top:416px;width:50px;height:27px;"><svg class="ico" width="51.5" height="27" style="left:0;top:0"><rect x="19.25" y="7" width="4" height="13" fill="#000"/><rect x="26.25" y="7" width="4" height="13" fill="#000"/></svg></div><div class="bb" style="left:159px;top:416px;width:50px;height:27px;"><svg class="ico" width="51.5" height="27" style="left:0;top:0"><path d="M16.3 7.3v12.4l12 -6.2z" fill="#000"/><rect x="28.8" y="7" width="3" height="13" fill="#000"/></svg></div><div class="bb" style="left:209px;top:416px;width:50px;height:27px;"><svg width="50" height="28" style="left:1px;top:0"><text x="1.800" y="12.800" textLength="42.300" lengthAdjust="spacingAndGlyphs" font-family="Liberation Sans, sans-serif" font-weight="bold" font-size="10.400" fill="#ff1418" stroke="#ff1418" stroke-width=".35">CROSS</text><text x="10.700" y="21.900" textLength="33.300" lengthAdjust="spacingAndGlyphs" font-family="Liberation Sans, sans-serif" font-weight="bold" font-size="10.400" fill="#ff1418" stroke="#ff1418" stroke-width=".35">FADE</text></svg></div><div class="bx" style="left:264.5px;top:415px;width:103.5px;height:30px;"></div><div class="bb" style="left:266px;top:416px;width:50px;height:27px;"><svg width="50" height="27" viewBox="0 0 50 27" style="left:0;top:0"><text x="5" y="17.9" textLength="41" lengthAdjust="spacingAndGlyphs" font-family="Liberation Sans, sans-serif" font-weight="bold" font-size="10" fill="#000" stroke="#000" stroke-width="0.6" >GET-O</text></svg></div><div class="bb" style="left:316px;top:416px;width:50.5px;height:27px;"><svg width="50" height="27" viewBox="0 0 50 27" style="left:0;top:0"><text x="6" y="17.9" textLength="38.4" lengthAdjust="spacingAndGlyphs" font-family="Liberation Sans, sans-serif" font-weight="bold" font-size="10" fill="#000" stroke="#000" stroke-width="0.6" >GET- I</text></svg></div><div class="" style="left:666px;top:415.5px;width:13px;height:29px;background:#7c7a1c"></div><div class="bx" style="left:684.5px;top:415px;width:28px;height:30px;"></div><div class="bb" style="left:685.5px;top:416px;width:26px;height:28px;"><svg class="ico" width="26" height="28" style="left:0;top:0"><path d="M7.500 9.500l9 9M16.500 9.500l-9 9" stroke="#000" stroke-width="3"/></svg></div><div class="disp" style="left:8px;top:451px;width:252.5px;height:29px;"></div><div class="disp" style="left:266px;top:451px;width:446.5px;height:29px;"></div><div class="bb" style="left:685.5px;top:452px;width:26px;height:27px;"><svg class="ico" width="26" height="27" style="left:0;top:0"><path d="M10 7.300h3.300v7.200h3.700l-5.400 5.300l-5.400 -5.300h3.800z" fill="#000"/></svg></div><div class="tbl" style="left:6px;top:485px;width:706px;height:303px"><div class="sel" style="left:0px;top:0"></div><div class="th" style="left:10px;width:75px"><b><em>ID</em>番号</b></div><div class="th" style="left:85px;width:132px"><b><u>ｺﾒﾝﾄ</u></b></div><div class="th" style="left:217px;width:151px"><b>再生時間<i class="sp"> </i><i>[</i><u class="n">ｵﾌｾｯﾄ</u><i>]</i></b></div><div class="th" style="left:368px;width:25px"><b><em>CT</em></b></div><div class="th" style="left:393px;width:91px"><b><u>ｲﾝﾄﾛ</u>時間</b></div><div class="th" style="left:484px;width:240px"><b><u>ﾌｫﾙﾀﾞ</u></b></div><div class="row on" style="top:21px;left:10px;width:714px"><div class="sel" style="left:-10px;top:0"></div><div class="td" style="left:0px;width:74px;padding-left:3px">M1012</div><div class="td" style="left:75px;width:131px;padding-left:2px;letter-spacing:.3px">Bless them All/Chris Rea</div><div class="td" style="left:207px;width:150px;padding-left:1px;letter-spacing:0">00:02:30.33</div><div class="td" style="left:358px;width:24px;"></div><div class="td" style="left:383px;width:90px;"></div><div class="td" style="left:474px;width:239px;padding-left:2px;letter-spacing:-.3px">D:¥demowav¥</div><div class="td" style="left:0;width:714px"></div><div class="focus" style="left:0;top:0;width:720px;height:20px"></div></div><div class="row" style="top:42px;left:10px;width:714px"><div class="sel" style="left:-10px;top:0"></div><div class="td" style="left:0px;width:74px;padding-left:3px">M1013</div><div class="td" style="left:75px;width:131px;padding-left:2px;letter-spacing:.3px">Crack That Mould/Chris Rea</div><div class="td" style="left:207px;width:150px;padding-left:1px;letter-spacing:0">00:04:34.54</div><div class="td" style="left:358px;width:24px;"></div><div class="td" style="left:383px;width:90px;"></div><div class="td" style="left:474px;width:239px;padding-left:2px;letter-spacing:-.3px">D:¥demowav¥</div><div class="td" style="left:0;width:714px"></div></div><div class="row" style="top:63px;left:10px;width:714px"><div class="sel" style="left:-10px;top:0"></div><div class="td" style="left:0px;width:74px;padding-left:3px">M1014</div><div class="td" style="left:75px;width:131px;padding-left:2px;letter-spacing:.3px">Love Is A Wonderful Thing/Michael Bolton</div><div class="td" style="left:207px;width:150px;padding-left:1px;letter-spacing:0">00:04:43.55</div><div class="td" style="left:358px;width:24px;"></div><div class="td" style="left:383px;width:90px;"></div><div class="td" style="left:474px;width:239px;padding-left:2px;letter-spacing:-.3px">D:¥demowav¥</div><div class="td" style="left:0;width:714px"></div></div><div class="row" style="top:84px;left:10px;width:714px"><div class="sel" style="left:-10px;top:0"></div><div class="td" style="left:0px;width:74px;padding-left:3px">M1015</div><div class="td" style="left:75px;width:131px;padding-left:2px;letter-spacing:.3px">Time, Love And Tenderness/Michael Bolton</div><div class="td" style="left:207px;width:150px;padding-left:1px;letter-spacing:0">00:05:31.31</div><div class="td" style="left:358px;width:24px;"></div><div class="td" style="left:383px;width:90px;"></div><div class="td" style="left:474px;width:239px;padding-left:2px;letter-spacing:-.3px">D:¥demowav¥</div><div class="td" style="left:0;width:714px"></div></div><div class="row" style="top:105px;left:10px;width:714px"><div class="sel" style="left:-10px;top:0"></div><div class="td" style="left:0px;width:74px;padding-left:3px">M1016</div><div class="td" style="left:75px;width:131px;padding-left:2px;letter-spacing:.3px">Missing You Now/Michael Bolton</div><div class="td" style="left:207px;width:150px;padding-left:1px;letter-spacing:0">00:04:33.42</div><div class="td" style="left:358px;width:24px;"></div><div class="td" style="left:383px;width:90px;"></div><div class="td" style="left:474px;width:239px;padding-left:2px;letter-spacing:-.3px">D:¥demowav¥</div><div class="td" style="left:0;width:714px"></div></div><div class="row" style="top:126px;left:10px;width:714px"><div class="sel" style="left:-10px;top:0"></div><div class="td" style="left:0px;width:74px;padding-left:3px">M1017</div><div class="td" style="left:75px;width:131px;padding-left:2px;letter-spacing:.3px">Forever Isn't Long Enough/Michael Bolton</div><div class="td" style="left:207px;width:150px;padding-left:1px;letter-spacing:0">00:04:32.58</div><div class="td" style="left:358px;width:24px;"></div><div class="td" style="left:383px;width:90px;"></div><div class="td" style="left:474px;width:239px;padding-left:2px;letter-spacing:-.3px">D:¥demowav¥</div><div class="td" style="left:0;width:714px"></div></div><div class="row" style="top:147px;left:10px;width:714px"><div class="sel" style="left:-10px;top:0"></div><div class="td" style="left:0px;width:74px;padding-left:3px">M1018</div><div class="td" style="left:75px;width:131px;padding-left:2px;letter-spacing:.3px">Now That I Found You/Michael Bolton</div><div class="td" style="left:207px;width:150px;padding-left:1px;letter-spacing:0">00:04:32.64</div><div class="td" style="left:358px;width:24px;"></div><div class="td" style="left:383px;width:90px;"></div><div class="td" style="left:474px;width:239px;padding-left:2px;letter-spacing:-.3px">D:¥demowav¥</div><div class="td" style="left:0;width:714px"></div></div><div class="row" style="top:168px;left:10px;width:714px"><div class="sel" style="left:-10px;top:0"></div><div class="td" style="left:0px;width:74px;padding-left:3px">M1019</div><div class="td" style="left:75px;width:131px;padding-left:2px;letter-spacing:.3px">When A Man Loves A Woman/Michael Bolton</div><div class="td" style="left:207px;width:150px;padding-left:1px;letter-spacing:0">00:03:52.12</div><div class="td" style="left:358px;width:24px;"></div><div class="td" style="left:383px;width:90px;"></div><div class="td" style="left:474px;width:239px;padding-left:2px;letter-spacing:-.3px">D:¥demowav¥</div><div class="td" style="left:0;width:714px"></div></div><div class="row" style="top:189px;left:10px;width:714px"><div class="sel" style="left:-10px;top:0"></div><div class="td" style="left:0px;width:74px;padding-left:3px">M1021</div><div class="td" style="left:75px;width:131px;padding-left:2px;letter-spacing:.3px">New Love/Michael Bolton</div><div class="td" style="left:207px;width:150px;padding-left:1px;letter-spacing:0">00:04:32.35</div><div class="td" style="left:358px;width:24px;"></div><div class="td" style="left:383px;width:90px;"></div><div class="td" style="left:474px;width:239px;padding-left:2px;letter-spacing:-.3px">D:¥demowav¥</div><div class="td" style="left:0;width:714px"></div></div><div class="row" style="top:210px;left:10px;width:714px"><div class="sel" style="left:-10px;top:0"></div><div class="td" style="left:0px;width:74px;padding-left:3px">M1022</div><div class="td" style="left:75px;width:131px;padding-left:2px;letter-spacing:.3px">Save Me/Michael Bolton</div><div class="td" style="left:207px;width:150px;padding-left:1px;letter-spacing:0">00:04:21.87</div><div class="td" style="left:358px;width:24px;"></div><div class="td" style="left:383px;width:90px;"></div><div class="td" style="left:474px;width:239px;padding-left:2px;letter-spacing:-.3px">D:¥demowav¥</div><div class="td" style="left:0;width:714px"></div></div><div class="row" style="top:231px;left:10px;width:714px"><div class="sel" style="left:-10px;top:0"></div><div class="td" style="left:0px;width:74px;padding-left:3px">M1023</div><div class="td" style="left:75px;width:131px;padding-left:2px;letter-spacing:.3px">Steel Bars/Michael Bolton</div><div class="td" style="left:207px;width:150px;padding-left:1px;letter-spacing:0">00:03:28.95</div><div class="td" style="left:358px;width:24px;"></div><div class="td" style="left:383px;width:90px;"></div><div class="td" style="left:474px;width:239px;padding-left:2px;letter-spacing:-.3px">D:¥demowav¥</div><div class="td" style="left:0;width:714px"></div></div><div class="row" style="top:252px;left:10px;width:714px"><div class="sel" style="left:-10px;top:0"></div><div class="td" style="left:0px;width:74px;padding-left:3px">M1024</div><div class="td" style="left:75px;width:131px;padding-left:2px;letter-spacing:.3px">AWAKENIN'-DON'T GO/PRISM</div><div class="td" style="left:207px;width:150px;padding-left:1px;letter-spacing:0">00:09:52.09</div><div class="td" style="left:358px;width:24px;"></div><div class="td" style="left:383px;width:90px;"></div><div class="td" style="left:474px;width:239px;padding-left:2px;letter-spacing:-.3px">D:¥demowav¥</div><div class="td" style="left:0;width:714px"></div></div><div class="row" style="top:273px;left:10px;width:714px"><div class="sel" style="left:-10px;top:0"></div><div class="td" style="left:0px;width:74px;padding-left:3px">M1025</div><div class="td" style="left:75px;width:131px;padding-left:2px;letter-spacing:.3px">DEJA VU/PRISM</div><div class="td" style="left:207px;width:150px;padding-left:1px;letter-spacing:0">00:08:44.61</div><div class="td" style="left:358px;width:24px;"></div><div class="td" style="left:383px;width:90px;"></div><div class="td" style="left:474px;width:239px;padding-left:2px;letter-spacing:-.3px">D:¥demowav¥</div><div class="td" style="left:0;width:714px"></div></div><div class="row" style="top:294px;left:10px;width:714px"><div class="sel" style="left:-10px;top:0"></div><div class="td" style="left:0px;width:74px;padding-left:3px">M1026</div><div class="td" style="left:75px;width:131px;padding-left:2px;letter-spacing:.3px">SHADE OF THE MOON LIGHT/PRISM</div><div class="td" style="left:207px;width:150px;padding-left:1px;letter-spacing:0">00:08:36.75</div><div class="td" style="left:358px;width:24px;"></div><div class="td" style="left:383px;width:90px;"></div><div class="td" style="left:474px;width:239px;padding-left:2px;letter-spacing:-.3px">D:¥demowav¥</div><div class="td" style="left:0;width:714px"></div></div><div class="row" style="top:315px;left:10px;width:714px"><div class="sel" style="left:-10px;top:0"></div><div class="td" style="left:0px;width:74px;padding-left:3px">M1027</div><div class="td" style="left:75px;width:131px;padding-left:2px;letter-spacing:.3px"></div><div class="td" style="left:207px;width:150px;padding-left:1px;letter-spacing:0"></div><div class="td" style="left:358px;width:24px;"></div><div class="td" style="left:383px;width:90px;"></div><div class="td" style="left:474px;width:239px;padding-left:2px;letter-spacing:-.3px">D:¥demowav¥</div><div class="td" style="left:0;width:714px"></div></div><div class="vl" style="left:84px"></div><div class="vl" style="left:216px"></div><div class="vl" style="left:367px"></div><div class="vl" style="left:392px"></div><div class="vl" style="left:483px"></div><div class="vl" style="left:723px"></div></div></div></div></body></html>
